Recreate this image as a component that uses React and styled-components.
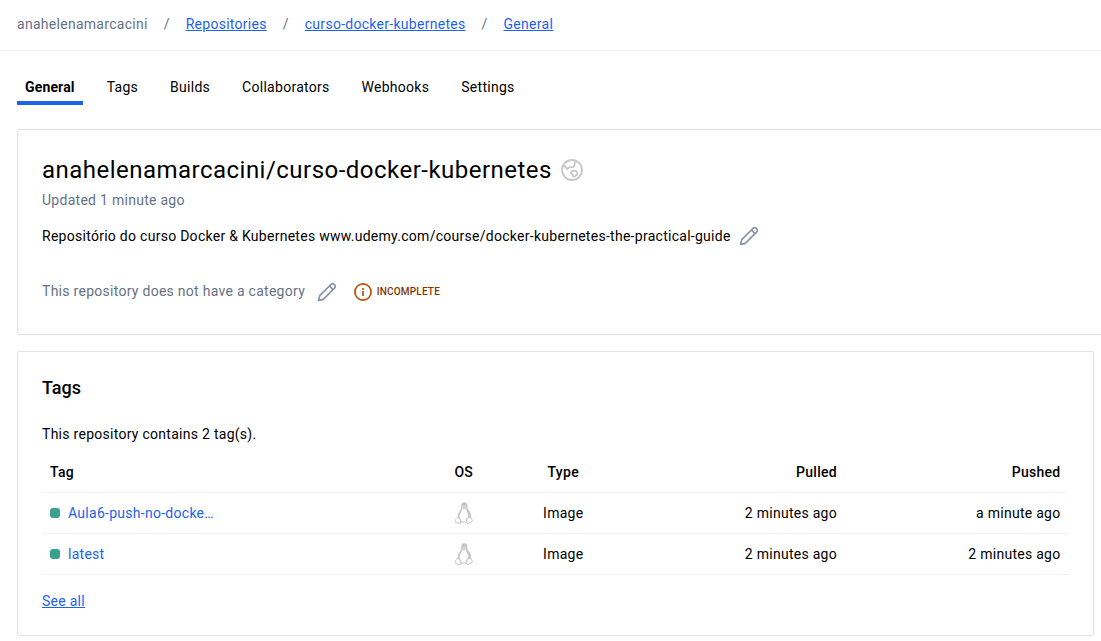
import React from "react";
import styled, { createGlobalStyle } from "styled-components";

const GlobalStyle = createGlobalStyle`
  * { box-sizing: border-box; }
  html, body { margin: 0; background: #fff; overflow: hidden; }
  body {
    font-family: Roboto, "Liberation Sans", sans-serif;
    font-size: 14px;
    line-height: 20px;
    letter-spacing: 0.275px;
    color: #000;
  }
`;

const Page = styled.div`
  width: 1101px;
  height: 641px;
  overflow: hidden;
`;

const Breadcrumbs = styled.nav`
  display: flex;
  align-items: center;
  height: 51px;
  padding: 0 17px 3px;
  border-bottom: 1px solid #efefef;
  color: #677285;
  letter-spacing: 0.28px;
`;

const Separator = styled.span`
  width: 6px;
  margin: 0 16px;
`;

const Link = styled.a`
  color: #1d63ed;
  text-decoration: ${(p) => (p.$plain ? "none" : "underline")};
`;

const Tabs = styled.div`
  display: flex;
  gap: 16px;
  margin: 26px 17px 24px;
`;

const Tab = styled.div`
  height: 28px;
  padding: 0 8px;
  font-weight: ${(p) => (p.$active ? 700 : 400)};
  letter-spacing: ${(p) => (p.$active ? "0.15px" : "inherit")};
  border-bottom: 4px solid ${(p) => (p.$active ? "#1d63ed" : "transparent")};
`;

const Card = styled.section`
  width: ${(p) => p.$width}px;
  height: ${(p) => p.$height}px;
  margin: 0 0 16px 17px;
  padding: 24px;
  border: 1px solid #e1e2e6;
  border-radius: 2px;
`;

const TitleLine = styled.div`
  display: flex;
  align-items: center;
  gap: 9px;
  height: 32px;
`;

const Title = styled.h1`
  margin: 0;
  font-size: 24px;
  line-height: 32px;
  font-weight: 400;
  letter-spacing: 0.48px;
`;

const Updated = styled.div`
  margin-top: 4px;
  color: #677285;
`;

const Line = styled.div`
  display: flex;
  align-items: center;
  height: 24px;
  margin-top: ${(p) => p.$top}px;
  color: ${(p) => (p.$muted ? "#677285" : "#000")};
`;

const IconSlot = styled.span`
  display: flex;
  margin-left: ${(p) => p.$left}px;
  margin-top: ${(p) => p.$drop || 0}px;
`;

const Badge = styled.span`
  display: flex;
  align-items: center;
  gap: 4.6px;
  margin: 2px 0 0 17px;
  color: #843400;
  font-size: 10px;
  font-weight: 500;
  letter-spacing: 0.2px;
`;

const Heading = styled.h2`
  margin: 0;
  font-size: 18px;
  line-height: 24px;
  font-weight: 500;
  letter-spacing: 0;
`;

const Summary = styled.p`
  margin: 24px 0 8px;
`;

const Table = styled.table`
  width: 1026.5px;
  table-layout: fixed;
  border-collapse: separate;
  border-spacing: 0;
`;

const Cell = styled.td`
  height: 41px;
  padding: 0 8px;
  border-bottom: 1px solid #f3f4f6;
  text-align: ${(p) => p.$align || "left"};
  font-weight: ${(p) => (p.$head ? 500 : 400)};
  vertical-align: middle;
`;

const TagName = styled.div`
  display: flex;
  align-items: center;
  gap: 8px;
`;

const Status = styled.span`
  width: 10px;
  height: 10px;
  border-radius: 3px;
  background: #3aa18e;
`;

const Footer = styled.div`
  margin-top: 16px;
`;

const Globe = () => (
  <svg width="22" height="22" viewBox="0 0 22 22" fill="none" stroke="#c8c8c8" strokeWidth="1.800" strokeLinejoin="round">
    <circle cx="11" cy="11" r="10" />
    <path d="M2 6.700 4.300 7.600 6.200 10 8.700 8.200h3.600L13.800 5.500V1.500" />
    <path d="M10 13.200 11.700 11.800h3l1.600 1.700v1.600L14 17.400h-2l-.5-2.300-1.500-.7z" />
  </svg>
);

const Pencil = () => (
  <svg width="20" height="20" viewBox="0 0 20 20" fill="none" stroke="#8993a5" strokeWidth="1.700" strokeLinejoin="round">
    <path d="M1.600 18.400 2.700 13.700 13.900 2.500a2.550 2.550 0 0 1 3.600 3.600L6.300 17.300z" />
    <path d="m12.400 4 3.600 3.600" />
  </svg>
);

const Info = () => (
  <svg width="18" height="18" viewBox="0 0 18 18" fill="none" stroke="#b65108" strokeWidth="1.700">
    <circle cx="9" cy="9" r="8.100" />
    <path d="M9 8.100v4.800M9 5.100v1.800" />
  </svg>
);

const Penguin = () => (
  <svg width="18" height="22" viewBox="0 0 18 22" style={{ display: "block", margin: "0 auto" }}>
    <path
      d="M9.200.300C7 .300 6.100 1.800 6.200 3.900c.1 1.700.1 2.500-1 4.100C3.900 9.900 2.700 12 2.800 14.300l-1.700 3.200-.6 3.300 5 .9 1.200-1.200h4.700l1 1.200 5-1.700-1.300-5.300c.3-2.700-1.200-5.300-2.700-7.200-1-1.300-.9-2.300-1-4C12.300 1.500 11.200.300 9.200.300z"
      fill="#c6c6c6"
    />
    <path d="M7.400 6.500 9 7.600l1.900-1.200c.3 2.200 1.700 3.900 2.300 6.100.3 1.200.2 2-.4 3.100l-1.300.8-.4 3H6.900l-2.200-3.900c-.4-2.400.7-4.300 1.500-6.100.6-1.100 1.100-1.600 1.200-2.900z" fill="#fff" />
    <path
      d="M2.200 15.400c1.200-.4 2.100 1.100 2.800 2.300.9 1.400 1.500 3.200-.4 3.500-1.300.1-3.300-.6-4.100-.7-.5-.8.3-1.700.1-3 .1-.7 1.100-.5 1.600-2.100zM12.100 16c.6-.9 1.600.7 2.700-.3.7-.8 1.500-.4 1.500.7l1.200 2.300c-.5 1-2.200 1.300-3.100 2.200-1.100 1-2.500.6-2.600-.7-.1-1.500.4-2.900.3-4.200z"
      fill="#fff"
      stroke="#c6c6c6"
      strokeWidth=".9"
    />
    <path d="M7.500 3.500v1M10 3.400v1M7.600 5.500 9 4.900l1.700.5L9 6.200z" fill="none" stroke="#eee" strokeWidth=".6" />
  </svg>
);

const crumbs = ["Repositories", "curso-docker-kubernetes", "General"];
const tabs = ["General", "Tags", "Builds", "Collaborators", "Webhooks", "Settings"];
const rows = [
  { name: "Aula6-push-no-docke…", pulled: "2 minutes ago", pushed: "a minute ago" },
  { name: "latest", pulled: "2 minutes ago", pushed: "2 minutes ago" },
];

export default function App() {
  return (
    <Page>
      <GlobalStyle />
      <Breadcrumbs>
        <span>anahelenamarcacini</span>
        {crumbs.map((c) => (
          <React.Fragment key={c}>
            <Separator>/</Separator>
            <Link>{c}</Link>
          </React.Fragment>
        ))}
      </Breadcrumbs>
      <Tabs>
        {tabs.map((t, i) => (
          <Tab key={t} $active={i === 0}>{t}</Tab>
        ))}
      </Tabs>
      <Card $width={1100} $height={206}>
        <TitleLine>
          <Title>anahelenamarcacini/curso-docker-kubernetes</Title>
          <Globe />
        </TitleLine>
        <Updated>Updated 1 minute ago</Updated>
        <Line $top={14}>
          Repositório do curso Docker &amp; Kubernetes www.udemy.com/course/docker-kubernetes-the-practical-guide
          <IconSlot $left={8}><Pencil /></IconSlot>
        </Line>
        <Line $top={31} $muted>
          This repository does not have a category
          <IconSlot $left={12} $drop={2}><Pencil /></IconSlot>
          <Badge><Info />INCOMPLETE</Badge>
        </Line>
      </Card>
      <Card $width={1077} $height={285}>
        <Heading>Tags</Heading>
        <Summary>This repository contains 2 tag(s).</Summary>
        <Table>
          <colgroup>
            <col style={{ width: 372 }} />
            <col style={{ width: 99.5 }} />
            <col style={{ width: 99.5 }} />
            <col style={{ width: 232 }} />
            <col />
          </colgroup>
          <thead>
            <tr>
              <Cell as="th" $head>Tag</Cell>
              <Cell as="th" $head $align="center">OS</Cell>
              <Cell as="th" $head $align="center">Type</Cell>
              <Cell as="th" $head $align="right">Pulled</Cell>
              <Cell as="th" $head $align="right">Pushed</Cell>
            </tr>
          </thead>
          <tbody>
            {rows.map((r) => (
              <tr key={r.name}>
                <Cell><TagName><Status /><Link $plain>{r.name}</Link></TagName></Cell>
                <Cell $align="center"><Penguin /></Cell>
                <Cell $align="center">Image</Cell>
                <Cell $align="right">{r.pulled}</Cell>
                <Cell $align="right">{r.pushed}</Cell>
              </tr>
            ))}
          </tbody>
        </Table>
        <Footer><Link>See all</Link></Footer>
      </Card>
    </Page>
  );
}
